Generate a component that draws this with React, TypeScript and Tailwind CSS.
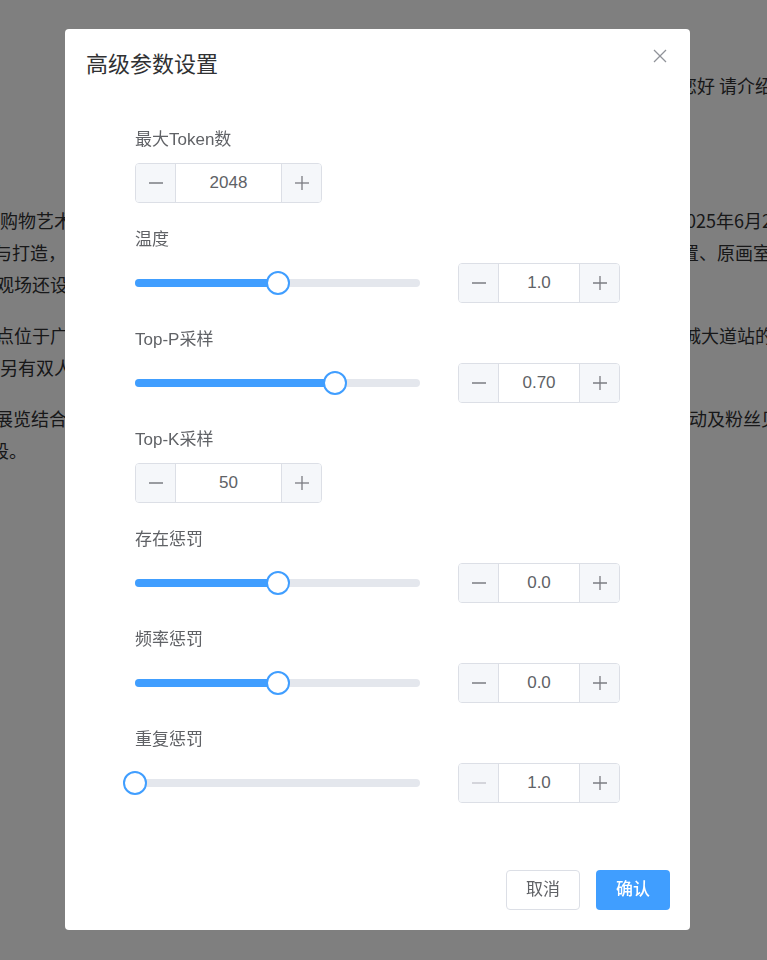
import React from 'react';

const font = { fontFamily: '"Liberation Sans", "Noto Sans CJK SC", sans-serif' };

// background page lines: [left text, left offset class, right text, right offset class]
const bgRows = [
  { top: 'mt-[103px]', left: '购物艺术展将于广州开幕', lo: 'ml-0', right: '2025年6月20日正式开展', ro: 'ml-[-5px]' },
  { top: '', left: '与打造，展区共分为五个部分', lo: 'ml-[-6px]', right: '置、原画室与互动体验区', ro: 'ml-0' },
  { top: '', left: '观场还设有限定周边售卖区', lo: 'ml-[-4px]', right: '', ro: 'ml-0' },
  { top: 'mt-[19px]', left: '点位于广州天河区购物中心', lo: 'ml-[-4px]', right: '城大道站的出口步行可达', ro: 'ml-[2px]' },
  { top: '', left: '另有双人套票可供选择', lo: 'ml-0', right: '', ro: 'ml-0' },
  { top: 'mt-[19px]', left: '展览结合线下活动与线上直播', lo: 'ml-[-5px]', right: '动及粉丝见面会等环节', ro: 'ml-[8px]' },
  { top: '', left: '段。', lo: 'ml-[-9px]', right: '', ro: 'ml-0' },
];

const MinusIcon = ({ disabled }: { disabled?: boolean }) => (
  <svg width="14" height="14" viewBox="0 0 14 14">
    <line x1="0" y1="7" x2="14" y2="7" stroke={disabled ? '#c8cad0' : '#7a7c82'} strokeWidth="1.3" />
  </svg>
);

const PlusIcon = () => (
  <svg width="14" height="14" viewBox="0 0 14 14">
    <line x1="0" y1="7" x2="14" y2="7" stroke="#7a7c82" strokeWidth="1.3" />
    <line x1="7" y1="0" x2="7" y2="14" stroke="#7a7c82" strokeWidth="1.3" />
  </svg>
);

const NumberInput = ({ value, width, minDisabled }: { value: string; width: string; minDisabled?: boolean }) => (
  <div className={`flex h-10 ${width} rounded-[4px] border border-[#dcdfe6] overflow-hidden`}>
    <div className="w-10 shrink-0 flex items-center justify-center bg-[#f5f7fa] border-r border-[#dcdfe6]">
      <MinusIcon disabled={minDisabled} />
    </div>
    <div className="flex-1 flex items-center justify-center bg-white text-[17px] text-[#606266]">{value}</div>
    <div className="w-10 shrink-0 flex items-center justify-center bg-[#f5f7fa] border-l border-[#dcdfe6]">
      <PlusIcon />
    </div>
  </div>
);

const Slider = ({ pct }: { pct: number }) => (
  <div className="w-[285px] h-10 flex items-center">
    <div className="relative w-full h-2 rounded-full bg-[#e4e7ed]">
      <div className="h-2 rounded-full bg-[#409eff]" style={{ width: `${pct}%` }} />
      <div
        className="absolute top-1/2 w-6 h-6 -translate-x-1/2 -translate-y-1/2 rounded-full border-2 border-[#409eff] bg-white"
        style={{ left: `${pct}%` }}
      />
    </div>
  </div>
);

const Field = ({ label, children }: { label: string; children: React.ReactNode }) => (
  <div className="mb-[25px]">
    <div className="h-6 leading-6 mb-[11px] text-[17px] text-[#606266]">{label}</div>
    {children}
  </div>
);

const SliderField = ({ label, pct, value, minDisabled }: { label: string; pct: number; value: string; minDisabled?: boolean }) => (
  <Field label={label}>
    <div className="flex items-center justify-between">
      <Slider pct={pct} />
      <NumberInput value={value} width="w-[162px]" minDisabled={minDisabled} />
    </div>
  </Field>
);

export default function App() {
  return (
    <div className="relative w-[767px] h-[960px] overflow-hidden bg-white" style={font}>
      {/* page behind the dialog */}
      <div className="flex flex-col text-[18px] text-[#303133] whitespace-nowrap" style={{ fontFamily: '"Noto Sans CJK SC", sans-serif' }}>
        <div className="flex h-8 items-center mt-[69px]">
          <div className="w-[681px] shrink-0" />
          <span className="ml-[-2px]">您好 请介绍一下这个展览</span>
        </div>
        {bgRows.map((r, i) => (
          <div key={i} className={`flex h-8 items-center ${r.top}`}>
            <div className="w-[681px] shrink-0 overflow-hidden">
              <span className={`inline-block ${r.lo}`}>{r.left}</span>
            </div>
            <span className={r.ro}>{r.right}</span>
          </div>
        ))}
      </div>

      {/* overlay */}
      <div className="fixed inset-0 bg-black/50">
        <div className="ml-[65px] mt-[29px] w-[625px] h-[901px] bg-white rounded-[4px] flex flex-col">
          <div className="flex justify-between pt-5 pl-[21px] pr-6">
            <div className="text-[22px] leading-8 text-[#303133]">高级参数设置</div>
            <svg width="14" height="14" viewBox="0 0 14 14" className="mr-[-1px]">
              <line x1="1" y1="1" x2="13" y2="13" stroke="#909399" strokeWidth="1.3" />
              <line x1="13" y1="1" x2="1" y2="13" stroke="#909399" strokeWidth="1.3" />
            </svg>
          </div>

          <div className="pt-[47px] px-[70px]">
            <Field label="最大Token数">
              <NumberInput value="2048" width="w-[187px]" />
            </Field>
            <SliderField label="温度" pct={50} value="1.0" />
            <SliderField label="Top-P采样" pct={70} value="0.70" />
            <Field label="Top-K采样">
              <NumberInput value="50" width="w-[187px]" />
            </Field>
            <SliderField label="存在惩罚" pct={50} value="0.0" />
            <SliderField label="频率惩罚" pct={50} value="0.0" />
            <SliderField label="重复惩罚" pct={0} value="1.0" minDisabled />
          </div>

          <div className="mt-auto flex justify-end gap-4 px-5 pb-5">
            <button className="w-[74px] h-10 rounded-[4px] border border-[#dcdfe6] bg-white text-[17px] text-[#606266]">取消</button>
            <button className="w-[74px] h-10 rounded-[4px] bg-[#409eff] text-[17px] font-medium text-white">确认</button>
          </div>
        </div>
      </div>
    </div>
  );
}
